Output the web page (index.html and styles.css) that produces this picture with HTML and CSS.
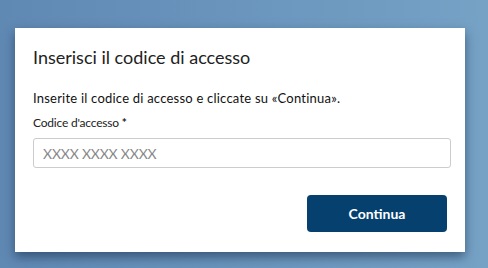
FILE: index.html
```html
<!DOCTYPE html>
<html>
<head>
  <title>Codice di accesso</title>
  <link rel="stylesheet" href="styles.css">
</head>
<body>
  <div class="card">
    <h2 class="title">Inserisci il codice di accesso</h2>
    <p class="intro">Inserite il codice di accesso e cliccate su «Continua».</p>
    <form class="code-form">
      <label class="label" for="code">Codice d'accesso <span class="req">*</span></label>
      <input class="code-input" type="text" id="code" placeholder="XXXX XXXX XXXX">
      <div class="actions">
        <button class="button" type="submit">Continua</button>
      </div>
    </form>
  </div>
</body>
</html>
```

FILE: styles.css
```css
html, body {
  height: 100%;
  margin: 0;
}
body {
  font-family: Lato, "Noto Sans", sans-serif;
  background: linear-gradient(to right, #5f88b3, #76a2c6);
  padding: 28px 0 0 15px;
  box-sizing: border-box;
  overflow: hidden;
}
.card {
  width: 450px;
  height: 224px;
  box-sizing: border-box;
  background: #fff;
  padding: 16px 18px 0 18px;
  box-shadow: 0 5px 10px rgba(20, 40, 70, 0.55);
}
.title {
  margin: 0;
  font-size: 18px;
  font-weight: normal;
  color: #222;
  line-height: 26px;
}
.intro {
  margin: 19px 0 0 0;
  font-size: 13px;
  letter-spacing: 0.22px;
  color: #111;
  line-height: 18px;
}
.label {
  display: block;
  margin-top: 8px;
  font-size: 12px;
  letter-spacing: -0.2px;
  color: #222;
  line-height: 16px;
}
.req {
  font-weight: bold;
}
.code-input {
  display: block;
  width: 418px;
  height: 30px;
  box-sizing: border-box;
  margin-top: 7px;
  padding: 0 9px;
  border: 1px solid #ccc;
  border-radius: 3px;
  font-family: Lato, "Noto Sans", sans-serif;
  font-size: 14px;
  letter-spacing: -0.2px;
}
.code-input::placeholder {
  color: #888;
}
.actions {
  display: flex;
  justify-content: flex-end;
  margin-top: 27px;
}
.button {
  width: 140px;
  height: 37px;
  border: none;
  border-radius: 4px;
  background-color: #05406f;
  color: #fff;
  font-family: Lato, "Noto Sans", sans-serif;
  font-size: 14px;
  font-weight: bold;
  cursor: pointer;
}
```
